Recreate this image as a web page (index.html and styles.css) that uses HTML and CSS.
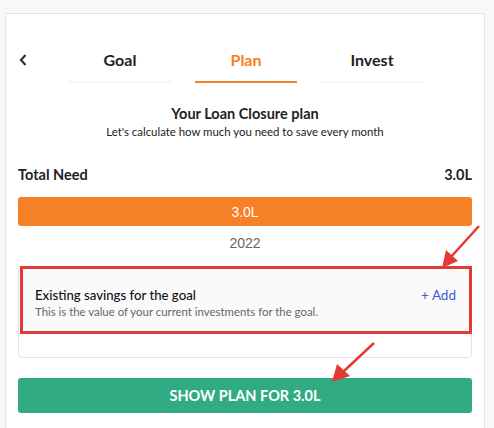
FILE: index.html
```html
<!DOCTYPE html>
<html>
<head>
<meta charset="utf-8">
<link rel="stylesheet" href="styles.css">
</head>
<body>
<div class="card">
  <div class="tabs">
    <button class="back" aria-label="Back">
      <svg width="10" height="14" viewBox="0 0 10 14"><polyline points="7.5,2 3,7 7.5,12" fill="none" stroke="#333" stroke-width="2.2"/></svg>
    </button>
    <div class="tab">Goal</div>
    <div class="tab active">Plan</div>
    <div class="tab">Invest</div>
  </div>
  <div class="title">Your Loan Closure plan</div>
  <div class="subtitle">Let's calculate how much you need to save every month</div>
  <div class="need">
    <span>Total Need</span>
    <span>3.0L</span>
  </div>
  <div class="bar">3.0L</div>
  <div class="year">2022</div>
  <div class="savings">
    <div class="item">
      <div class="item-text">
        <div class="item-title">Existing savings for the goal</div>
        <div class="item-sub">This is the value of your current investments for the goal.</div>
      </div>
      <div class="add">+ Add</div>
      <div class="highlight"></div>
    </div>
  </div>
  <button class="cta">SHOW PLAN FOR 3.0L</button>
</div>
<svg class="arrows" width="494" height="428" viewBox="0 0 494 428">
  <line x1="479" y1="226" x2="450" y2="258" stroke="#e53935" stroke-width="2.5"/>
  <polygon points="442,268 446,250 458,261" fill="#e53935"/>
  <line x1="374" y1="343" x2="344" y2="371" stroke="#e53935" stroke-width="2.5"/>
  <polygon points="332,382 337,364 350,376" fill="#e53935"/>
</svg>
</body>
</html>
```
FILE: styles.css
```css
* { box-sizing: border-box; }
html, body { margin: 0; padding: 0; }
body {
  background: #f8f8f8;
  font-family: Lato, "Noto Sans", sans-serif;
  color: #222;
  width: 494px;
  height: 428px;
  overflow: hidden;
  position: relative;
}
.card {
  margin: 13px 0 0 5px;
  width: 480px;
  height: 430px;
  background: #fff;
  border: 1px solid #e6e6e6;
  border-bottom: none;
  padding: 36px 12px 0;
}
.tabs {
  display: flex;
  align-items: flex-start;
  gap: 24px;
  padding-left: 51px;
  position: relative;
}
.back {
  position: absolute;
  left: 0;
  top: 3px;
  border: none;
  background: none;
  padding: 0;
  width: 12px;
  height: 14px;
  display: flex;
}
.tab {
  width: 102px;
  text-align: center;
  font-size: 16px;
  font-weight: 700;
  line-height: 20px;
  padding-bottom: 11px;
  border-bottom: 2px solid #f5f5f5;
  color: #222;
}
.tab.active {
  color: #f58025;
  border-bottom-color: #f58025;
}
.title {
  margin-top: 22px;
  text-align: center;
  font-size: 14.5px;
  font-weight: 700;
  line-height: 18px;
  color: #222;
}
.subtitle {
  text-align: center;
  font-size: 11.4px;
  line-height: 16px;
  color: #222;
  margin-top: 1px;
}
.need {
  margin-top: 25px;
  display: flex;
  justify-content: space-between;
  font-size: 14.5px;
  font-weight: 700;
  line-height: 20px;
  color: #222;
}
.bar {
  margin-top: 12px;
  height: 29px;
  background: #f58025;
  border-radius: 3px;
  color: #fff;
  font-family: "Liberation Sans", Arial, sans-serif;
  font-size: 14px;
  display: flex;
  align-items: center;
  justify-content: center;
}
.year {
  margin-top: 8px;
  text-align: center;
  font-family: "Liberation Sans", Arial, sans-serif;
  font-size: 14px;
  line-height: 18px;
  color: #666;
}
.savings {
  margin-top: 14px;
  border: 1px solid #e3e3e3;
  border-radius: 4px;
  height: 92px;
}
.item {
  position: relative;
  background: #fafafa;
  height: 66px;
  display: flex;
  justify-content: space-between;
  align-items: flex-start;
  padding: 19px 15px 0 16px;
}
.item-title {
  font-size: 13.2px;
  line-height: 18px;
  color: #111;
  font-weight: 500;
}
.item-sub {
  font-size: 11.4px;
  line-height: 14px;
  color: #666;
  margin-top: 1px;
}
.add {
  font-size: 13.5px;
  line-height: 18px;
  color: #3a5ad6;
}
.highlight {
  position: absolute;
  left: 1px;
  right: -1px;
  top: -1px;
  bottom: -1px;
  border: 3px solid #e53935;
}
.cta {
  display: block;
  width: 100%;
  margin-top: 20px;
  height: 35px;
  border: none;
  border-radius: 3px;
  background: #30ab84;
  color: #fff;
  font-family: Lato, "Noto Sans", sans-serif;
  font-weight: 700;
  font-size: 14.5px;
  padding: 0;
}
.arrows {
  position: absolute;
  left: 0;
  top: 0;
  pointer-events: none;
}
```
